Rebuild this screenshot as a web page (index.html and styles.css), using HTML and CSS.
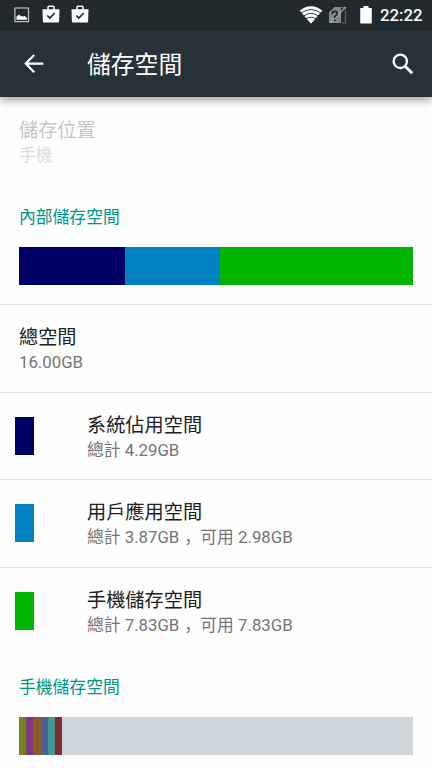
FILE: index.html
```html
<!DOCTYPE html>
<html lang="zh-Hant">
<head>
<meta charset="utf-8">
<title>儲存空間</title>
<link rel="stylesheet" href="styles.css">
</head>
<body>
<header class="status">
  <div class="notices">
    <svg class="picture" width="16" height="16" viewBox="0 0 16 16"><rect x=".9" y="1" width="13.6" height="13.6" fill="none" stroke="#bfc1c2" stroke-width="1.2"/><path d="M2.500 12.700V9.500L5 7.500l2 2 1-.7 1 1 1.500-.8 2.500 2v1.700z" fill="#fff"/></svg>
    <svg class="bag" width="18" height="18" viewBox="0 0 18 18"><path d="M6 5V2.500Q6 1.300 7.200 1.300h3.600Q12 1.300 12 2.500V5" fill="none" stroke="#fff" stroke-width="1.500"/><path d="M.5 4.300h17l-.4 12.200q-.1 1-1.100 1H2q-1 0-1.100-1z" fill="#fff"/><path d="M5.300 10.500l2.500 2.500 5-5" fill="none" stroke="#22292c" stroke-width="1.700"/></svg>
    <svg class="bag" width="18" height="18" viewBox="0 0 18 18"><path d="M6 5V2.500Q6 1.300 7.200 1.300h3.600Q12 1.300 12 2.500V5" fill="none" stroke="#fff" stroke-width="1.500"/><path d="M.5 4.300h17l-.4 12.200q-.1 1-1.100 1H2q-1 0-1.100-1z" fill="#fff"/><path d="M5.300 10.500l2.500 2.500 5-5" fill="none" stroke="#22292c" stroke-width="1.700"/></svg>
  </div>
  <div class="system">
    <svg class="wifi" width="24" height="18" viewBox="0 0 24 18"><path d="M.6 4.500Q12-4 23.400 4.500L12 17.800z" fill="#fff"/><path d="M2 7.200Q12-.2 22 7.200M4.500 10.100Q12 4.600 19.500 10.100M7 13Q12 9.400 17 13" fill="none" stroke="#22292c" stroke-width=".9"/></svg>
    <svg class="sim" width="19" height="18" viewBox="0 0 19 18"><path d="M1 17V6.500L6.500 1H13v16z" fill="#85898b"/><path d="M13 1.500h4.500V17H13" fill="none" stroke="#5d6366" stroke-width="1.200"/><path d="M2.500 17L17.500 1.200" stroke="#a5a8aa" stroke-width="1.200"/><path d="M4 8Q4.300 5.400 6.800 5.400T9.300 7.600Q9.300 9 6.800 10.500v1.500M6.800 13.200v1.700" fill="none" stroke="#22292c" stroke-width="1.700"/></svg>
    <svg class="battery" width="12" height="18" viewBox="0 0 12 18"><path d="M3.500 0h5v2H11q.8 0 .8.800v14q0 .8-.8.800H1q-.8 0-.8-.8v-14Q.2 2 1 2h2.500z" fill="#fff"/></svg>
    <span class="clock">22:22</span>
  </div>
</header>
<nav class="appbar">
  <svg class="back" width="20" height="20" viewBox="0 0 20 20"><path d="M10.200 1L1.700 9.600l8.500 8.600M2 9.600h17.300" fill="none" stroke="#fff" stroke-width="2.200"/></svg>
  <h1>儲存空間</h1>
  <svg class="search" width="22" height="22" viewBox="0 0 22 22"><circle cx="8.300" cy="8.300" r="6.700" fill="none" stroke="#fff" stroke-width="2.300"/><path d="M13.200 13.200l7 7" stroke="#fff" stroke-width="3"/></svg>
</nav>
<main>
  <section class="location"><div class="name">儲存位置</div><div class="detail">手機</div></section>
  <h2>內部儲存空間</h2>
  <div class="usage"><i class="navy"></i><i class="blue"></i><i class="green"></i></div>
  <section class="row total"><div><div class="name">總空間</div><div class="detail">16.00GB</div></div></section>
  <section class="row"><i class="swatch navy"></i><div><div class="name">系統佔用空間</div><div class="detail">總計 4.29GB</div></div></section>
  <section class="row"><i class="swatch blue"></i><div><div class="name">用戶應用空間</div><div class="detail">總計 3.87GB<span class="comma" lang="zh-Hans">，</span> 可用 2.98GB</div></div></section>
  <section class="row last"><i class="swatch green"></i><div><div class="name">手機儲存空間</div><div class="detail">總計 7.83GB<span class="comma" lang="zh-Hans">，</span> 可用 7.83GB</div></div></section>
  <h2 class="phone">手機儲存空間</h2>
  <div class="usage files"><i class="olive"></i><i class="purple"></i><i class="brown"></i><i class="indigo"></i><i class="teal"></i><i class="red"></i></div>
</main>
</body>
</html>
```
FILE: styles.css
```css
* { box-sizing: border-box; }
body {
  margin: 0;
  width: 432px;
  height: 768px;
  overflow: hidden;
  background: #fefefe;
  color: #212121;
  font-family: Roboto, "Noto Sans CJK TC", sans-serif;
}
svg { display: block; flex: none; }
.status {
  height: 30px;
  background: #22292c;
  display: flex;
  justify-content: space-between;
  padding: 0 9px 0 14px;
}
.notices, .system { display: flex; align-items: flex-start; }
.picture { margin-top: 7px; }
.bag { margin: 5px 0 0 11.500px; }
.bag + .bag { margin-left: 11px; }
.wifi { margin: 6px 5px 0 -1px; }
.sim { margin: 6px 13px 0 0; }
.battery { margin: 6px 8px 0 0; }
.clock {
  color: #fff;
  font-size: 16.800px;
  font-weight: 500;
  line-height: 31px;
  width: 43px;
  white-space: nowrap;
}
.appbar {
  height: 67px;
  background: #263238;
  display: flex;
  align-items: center;
  padding: 0 18px 0 24px;
  box-shadow: 0 3px 9px rgba(0, 0, 0, .4);
}
.appbar h1 {
  margin: 2px auto 0 43px;
  color: #fff;
  font-size: 23.800px;
  font-weight: 400;
  line-height: 36px;
}
.location { height: 107px; padding: 21px 19px 0; }
.name { font-size: 19.200px; line-height: 25px; }
.detail { font-size: 16.800px; line-height: 24px; color: #757575; white-space: pre; }
.location .name { color: #c6c6c6; }
.location .detail { color: #dcdcdc; }
.comma {
  display: inline-block;
  width: 1em;
  padding-left: 5px;
  line-height: 1;
  font-family: "Noto Sans CJK SC", sans-serif;
  font-feature-settings: "halt";
}
h2 {
  margin: 0;
  height: 43px;
  padding: 1px 0 0 19px;
  color: #009688;
  font-size: 16.800px;
  font-weight: 400;
  line-height: 24px;
}
.usage { display: flex; height: 38px; margin: 0 19px 19px; }
.usage .navy { width: 106px; }
.usage .blue { width: 95px; }
.usage .green { flex: 1; }
.navy { background: #000064; }
.blue { background: #0081c2; }
.green { background: #00b400; }
.row {
  height: 87.600px;
  border-top: 1px solid #e3e3e3;
  display: flex;
  align-items: center;
  padding-left: 15px;
}
.row > div { padding-top: 3px; }
.row.total { padding-left: 19px; }
.swatch { width: 19px; height: 38px; margin-right: 53px; }
.row.last { height: 107px; padding-bottom: 20px; }
.usage.files { background: #cfd6dc; }
.files i { width: 7.200px; }
.olive { background: #78821b; }
.purple { background: #7d3c82; }
.brown { background: #925a2c; }
.indigo { background: #486094; }
.teal { background: #489692; }
.red { background: #7d2c2f; }
```
